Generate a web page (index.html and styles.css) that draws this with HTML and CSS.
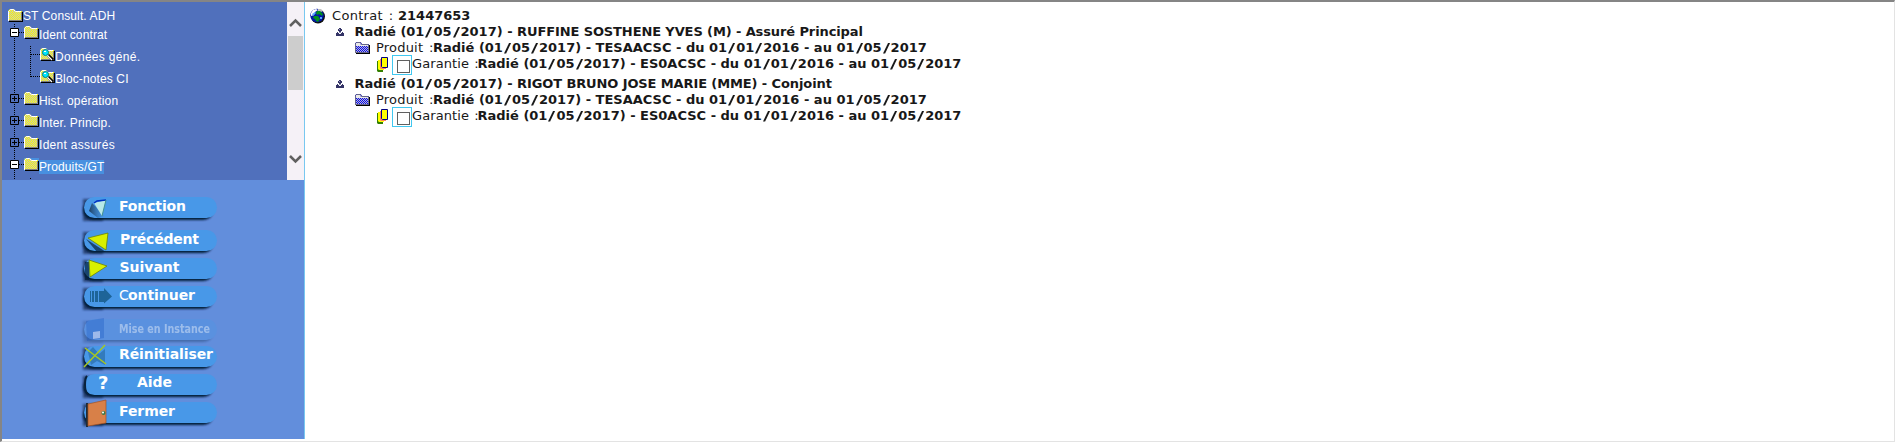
FILE: index.html
```html
<!DOCTYPE html>
<html lang="fr">
<head>
<meta charset="utf-8">
<title>ST Consult. ADH</title>
<link rel="stylesheet" href="styles.css">
</head>
<body>
<svg class="defs" width="0" height="0" aria-hidden="true">
  <defs>
    <pattern id="dither" width="2" height="2" patternUnits="userSpaceOnUse"><path fill="#ffff00" d="M0 0h2v2H0z"/><path fill="#c0c0c0" d="M0 0h1v1H0zM1 1h1v1H1z"/></pattern>
    <pattern id="blue" width="2" height="2" patternUnits="userSpaceOnUse"><path fill="#0000ff" d="M0 0h2v2H0z"/><path fill="#c0c0c0" d="M0 0h1v1H0zM1 1h1v1H1z"/></pattern>
    <filter id="soft" x="-10%" y="-30%" width="120%" height="170%"><feGaussianBlur stdDeviation="1.1"/></filter>
    <linearGradient id="dip" x1="0" x2="1"><stop offset="0" stop-color="#123" stop-opacity=".75"/><stop offset="1" stop-color="#2468a8" stop-opacity="0"/></linearGradient>
  </defs>
  <symbol id="folder" viewBox="0 0 15 13"><path fill="#000" d="M14 3h1v10H1v-1h13z"/><path fill="url(#dither)" d="M0 2l1-1 1-1h4l2 2h6v10H0z"/><path fill="none" stroke="#fff" d="M.5 12V2.500l1-1 1-1h3l2 2H13"/><path fill="none" stroke="#808080" d="M13.500 3v8.500H1"/></symbol>
  <symbol id="find" viewBox="0 0 15 13"><use href="#folder" width="15" height="13"/><path stroke="#000" stroke-width="3" d="M8 7l5 5"/><path stroke="#fff" stroke-width="1.200" d="M7 7l5 5"/><circle cx="5.500" cy="4.500" r="3" fill="#00e5ff" stroke="#008080"/><path fill="#fff" d="M4 3h2v1H4z"/></symbol>
  <symbol id="plus" viewBox="0 0 9 9"><path fill="none" stroke="#000" d="M.5.5h8v8h-8zM2 4.500h5M4.500 2v5"/></symbol>
  <symbol id="minus" viewBox="0 0 9 9"><path fill="#fff" stroke="#000" d="M.5.5h8v8h-8z"/><path stroke="#000" d="M2 4.500h5"/></symbol>
  <symbol id="globe" viewBox="0 0 15 16"><circle cx="8" cy="8.500" r="7" fill="#111"/><circle cx="7" cy="7.500" r="6.800" fill="#0018a8"/><path fill="#fff" d="M1 5l2-3 3-1 2 1-3 2-1 3-3 1z"/><path fill="#c0c0c0" d="M8 1h3l2 2-2 1-3-1z"/><path fill="#009020" d="M7 3l3 0 3 3-1 2-3-2-2 1-1-2zM4 8l4 0 2 3-2 3-2-1-1-2-2-1z"/><path fill="#58a8ff" d="M2 6l3-2 1 1-3 3zM10 9h2v2h-2z"/></symbol>
  <symbol id="person" viewBox="0 0 8 8"><path fill="#333366" d="M3 0h2v1h1v2H5v1H3V3H2V1h1zM1 4h1v1h1v1h2V5h1V4h1v1h1v3H0V5h1z"/><path fill="#9999bb" d="M3 4h2v1H3zM3 1h1v1H3z"/></symbol>
  <symbol id="product" viewBox="0 0 15 12"><path fill="#000" d="M14 3h1v9H1v-1h13z"/><path fill="url(#blue)" d="M0 1l1-1h5l1 2h7v9H0z"/><path fill="#e8e8e8" d="M1 1h4l1 2h7v1H1z"/><path fill="none" stroke="#666688" d="M.5 11V1.500l1-1h4l1 2h7v8H.5"/></symbol>
  <symbol id="stack" viewBox="0 0 11 15"><path fill="#338000" d="M0 4h6v11H1l-1-1z"/><path fill="#ffff00" d="M1 3h6v10H2l-1-1z"/><path fill="#ff8060" d="M3 2h6v10H4l-1-1z"/><path fill="#ffff00" stroke="#000080" d="M4.500.5h6v10h-5l-1-1z"/></symbol>
  <symbol id="pill" viewBox="0 0 136 29" overflow="visible"><rect x="1" y="3" width="20" height="22" fill="#0c2448" opacity=".65" filter="url(#soft)"/><rect x="1" y="5" width="130" height="19" rx="9.500" fill="#061c38" filter="url(#soft)"/><rect x="2" y="1" width="133" height="21" rx="10.500" fill="#4898e8"/></symbol>
</svg>

<div class="frame">
  <aside class="sidebar">
    <div class="tree">
      <nav class="nodes">
        <svg class="lines" width="60" height="178"><path d="M12.500 22V178M28.500 44V75M29 52.500h10M29 74.500h10M17 30.500h6M17 96.500h6M17 118.500h6M17 140.500h6M17 162.500h6M28.500 176v2"/></svg>
        <div class="node root"><svg width="15" height="13"><use href="#folder"/></svg><span>ST Consult. ADH</span></div>
        <div class="node level1"><svg class="toggle" width="9" height="9"><use href="#minus" width="9" height="9"/></svg><svg width="15" height="13"><use href="#folder"/></svg><span>Ident contrat</span></div>
        <div class="node level2"><svg width="15" height="13"><use href="#find" width="15" height="13"/></svg><span class="wide">Données géné.</span></div>
        <div class="node level2"><svg width="15" height="13"><use href="#find" width="15" height="13"/></svg><span>Bloc-notes CI</span></div>
        <div class="node level1"><svg class="toggle" width="9" height="9"><use href="#plus" width="9" height="9"/></svg><svg width="15" height="13"><use href="#folder"/></svg><span>Hist. opération</span></div>
        <div class="node level1"><svg class="toggle" width="9" height="9"><use href="#plus" width="9" height="9"/></svg><svg width="15" height="13"><use href="#folder"/></svg><span>Inter. Princip.</span></div>
        <div class="node level1"><svg class="toggle" width="9" height="9"><use href="#plus" width="9" height="9"/></svg><svg width="15" height="13"><use href="#folder"/></svg><span class="wide">Ident assurés</span></div>
        <div class="node level1 selected"><svg class="toggle" width="9" height="9"><use href="#minus" width="9" height="9"/></svg><svg class="icon" width="15" height="13"><use href="#folder"/></svg><span>Produits/GT</span></div>
      </nav>
      <div class="scrollbar"><svg width="17" height="34"><path d="M3 24l5.500-5.500L14 24"/></svg><div class="thumb"></div><svg class="down" width="17" height="34"><path d="M3 10l5.500 5.500L14 10"/></svg></div>
    </div>
    <div class="actions">
      <svg class="action" width="136" height="29"><use href="#pill" width="136" height="29"/><path fill="url(#dip)" d="M10 7l13 13-7 2L7 15z"/><path fill="#b8e8e8" d="M12 7l12-3-4 16z"/><path fill="none" stroke="#0030c0" stroke-width="1.500" d="M12 7l3-2 9-1"/><path fill="none" stroke="#409090" d="M24 4l-4 16"/><text x="37" y="14.500" textLength="67">Fonction</text></svg>
      <svg class="action gap" width="136" height="29"><use href="#pill" width="136" height="29"/><path fill="#06213c" opacity=".7" d="M4 10l20 13-9 0z"/><path fill="#d8f000" stroke="#6c8500" stroke-width=".8" d="M6 9l20-5-2 17z"/><text x="38" y="14.500" textLength="79">Précédent</text></svg>
      <svg class="action" width="136" height="29"><use href="#pill" width="136" height="29"/><path fill="#06213c" opacity=".7" d="M3 5h4v18H3z"/><path fill="#d8f000" stroke="#6c8500" stroke-width=".8" d="M7 3l18 6L8 20z"/><text x="37.500" y="14.500" textLength="60">Suivant</text></svg>
      <svg class="action" width="136" height="29"><use href="#pill" width="136" height="29"/><path fill="#1e6498" d="M8 6h1v11H8zM10 6h2v11h-2zM13 6h3v11h-3zM17 6h5V3l8 8.500-8 7V17h-5z"/><text x="37" y="14.500"><tspan class="thin" textLength="9">C</tspan><tspan x="46" textLength="67">ontinuer</tspan></text></svg>
      <svg class="action gap disabled" width="136" height="29"><use href="#pill" width="136" height="29"/><path fill="#1050c0" d="M4 3l18-3v20L5 23z"/><path class="slot" fill="#a8c0ec" d="M11 14l7-1v7l-7 1z"/><text x="37" y="14.500" textLength="91" lengthAdjust="spacingAndGlyphs">Mise en Instance</text></svg>
      <svg class="action tight" width="136" height="29"><use href="#pill" width="136" height="29"/><path fill="#1a5888" opacity=".45" d="M6 7l5-5 6 7 6-5v16l-8-4-6 4z"/><path fill="none" stroke="#a8c820" stroke-width="1.500" d="M3 3l21 16M2 22L23 0"/><text x="37" y="14" textLength="94">Réinitialiser</text></svg>
      <svg class="action" width="136" height="29"><use href="#pill" width="136" height="29"/><path fill="none" stroke="#09213c" stroke-width="2" d="M5 3Q3 5 3 12t3 9"/><text class="question" x="16" y="16">?</text><text x="55" y="14" textLength="35">Aide</text></svg>
      <svg class="action" width="136" height="29"><use href="#pill" width="136" height="29"/><path fill="#202c38" d="M4 2h2v24H4z"/><path fill="#d88048" stroke="#a85020" stroke-width=".7" d="M6 3l18-4v23L6 25z"/><circle cx="21.500" cy="12" r="2" fill="#387848"/><circle cx="21" cy="11.500" r="1" fill="#fff"/><text x="37" y="15" textLength="56">Fermer</text></svg>
    </div>
  </aside>
  <main class="content">
    <div class="line contract"><svg width="15" height="16"><use href="#globe" width="15" height="16"/></svg><span class="label">Contrat : </span><b>21447653</b></div>
    <section>
      <div class="line insured"><svg width="8" height="8"><use href="#person" width="8" height="8"/></svg><b>Radié (01<i>/</i>05<i>/</i>2017) - <span class="name">RUFFINE SOSTHENE YVES (M) - Assuré Principal</span></b></div>
      <div class="line product"><svg width="15" height="12"><use href="#product" width="15" height="12"/></svg><span class="label">Produit :</span><b>Radié (01<i>/</i>05<i>/</i>2017) - TESAACSC - du 01<i>/</i>01<i>/</i>2016 - au 01<i>/</i>05<i>/</i>2017</b></div>
      <div class="line cover"><svg width="11" height="15"><use href="#stack" width="11" height="15"/></svg><span class="check"></span><span class="label">Garantie :</span><b>Radié (01<i>/</i>05<i>/</i>2017) - ES0ACSC - du 01<i>/</i>01<i>/</i>2016 - au 01<i>/</i>05<i>/</i>2017</b></div>
    </section>
    <section>
      <div class="line insured"><svg width="8" height="8"><use href="#person" width="8" height="8"/></svg><b>Radié (01<i>/</i>05<i>/</i>2017) - <span class="name">RIGOT BRUNO JOSE MARIE (MME) - Conjoint</span></b></div>
      <div class="line product"><svg width="15" height="12"><use href="#product" width="15" height="12"/></svg><span class="label">Produit :</span><b>Radié (01<i>/</i>05<i>/</i>2017) - TESAACSC - du 01<i>/</i>01<i>/</i>2016 - au 01<i>/</i>05<i>/</i>2017</b></div>
      <div class="line cover"><svg width="11" height="15"><use href="#stack" width="11" height="15"/></svg><span class="check"></span><span class="label">Garantie :</span><b>Radié (01<i>/</i>05<i>/</i>2017) - ES0ACSC - du 01<i>/</i>01<i>/</i>2016 - au 01<i>/</i>05<i>/</i>2017</b></div>
    </section>
  </main>
</div>
</body>
</html>
```
FILE: styles.css
```css
* { box-sizing: border-box; }
body { margin: 0; background: #fff; overflow: hidden; }
svg { display: block; flex: none; overflow: visible; }
.defs { position: absolute; }
.frame { display: flex; width: 1895px; height: 442px; border-style: solid; border-width: 2px 1px 1px 2px; border-color: #858585 #e3e3e3 #e3e3e3 #858585; }
.sidebar { width: 303px; height: 437px; border-right: 1px solid #78c8f0; display: flex; flex-direction: column; }
.tree { display: flex; height: 178px; background: #5070bc; overflow: hidden; }
.nodes { position: relative; width: 285px; color: #fff; font: 12px/14px "Liberation Sans", Arial, sans-serif; }
.lines { position: absolute; left: 0; top: 0; }
.lines path { fill: none; stroke: #000; stroke-dasharray: 1 1; }
.node { position: relative; display: flex; height: 22px; align-items: flex-start; }
.node span { margin-top: 2px; height: 14px; white-space: pre; letter-spacing: .12px; }
.node .wide { letter-spacing: .3px; }
.node.root { padding: 7px 0 0 6px; height: 24px; }
.node.root span { margin-top: 0; }
.level1 { padding-left: 8px; }
.level1 .toggle { margin: 2px 5px 0 0; }
.level2 { padding-left: 38px; }
.selected .icon, .selected span { background: #4890e0; }
.scrollbar { width: 17px; background: #f5f1f7; display: flex; flex-direction: column; }
.scrollbar path { fill: none; stroke: #606060; stroke-width: 2.5; }
.thumb { width: 15px; height: 54px; margin-left: 1px; background: #cdcdcd; }
.down { margin-top: auto; }
.actions { flex: 1; background: #628edc; padding: 16px 0 0 80px; display: flex; flex-direction: column; }
.action { margin-bottom: -1px; }
.action text { font: bold 14px "DejaVu Sans", Verdana, sans-serif; fill: #fff; }
.action .thin { font: 14px "DejaVu Sans", sans-serif; }
.action .question { font-size: 18px; }
.gap { margin-top: 5px; }
.tight { margin-top: -1px; }
.disabled > * { opacity: .3; }
.disabled .slot { opacity: .9; }
.action.disabled text { font-size: 12px; opacity: .4; }
.content { flex: 1; padding: 5px 0 0 5px; color: #181818; font: 13px/16px "DejaVu Sans", Verdana, sans-serif; }
.line { display: flex; height: 16px; align-items: center; white-space: pre; }
.label, .line b { flex: none; height: 16px; line-height: 16px; }
.line i { display: inline-block; width: 9px; text-align: center; font-style: normal; transform: scaleX(1.5); }
.contract { height: 17px; }
.contract .label { margin-left: 7px; width: 66px; letter-spacing: .3px; word-spacing: 1.5px; }
.insured { padding-left: 26px; }
.insured b { margin-left: 10.5px; }
.name { letter-spacing: -.11px; }
.product { padding-left: 45px; }
.product .label { margin-left: 6px; width: 57px; letter-spacing: .2px; word-spacing: 1.5px; }
.cover { padding-left: 67px; }
.check { width: 20px; height: 20px; border: 1px solid #40c8f0; margin: 1px 0 0 4px; padding: 4px; flex: none; }
.check::before { content: ""; display: block; width: 11px; height: 11px; border: 1px solid #606060; }
.cover .label { width: 65.5px; letter-spacing: .1px; word-spacing: 1px; }
section + section { margin-top: 4px; }
```
